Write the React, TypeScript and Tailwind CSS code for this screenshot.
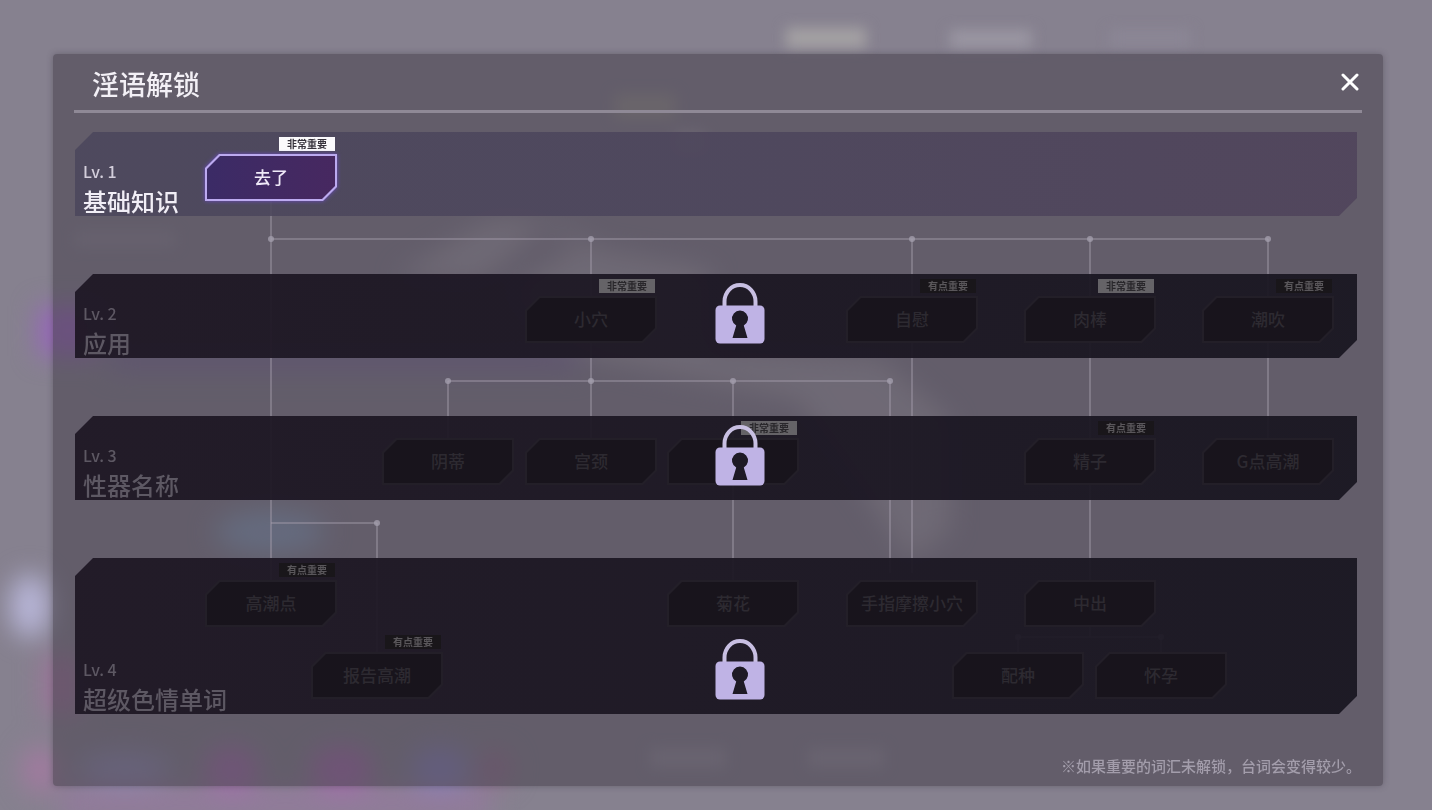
import clsx from 'clsx';

type Importance = 'high' | 'medium';

interface WordNode {
  label: string;
  x: number;
  line?: number;
  importance?: Importance;
}

interface Level {
  level: number;
  name: string;
  locked: boolean;
  tall?: boolean;
  nodes: WordNode[];
}

// x values are measured on a tree this many units wide
const TREE_WIDTH = 1282;
const pct = (x: number) => `${(x / TREE_WIDTH) * 100}%`;

const levels: Level[] = [
  {
    level: 1,
    name: '基础知识',
    locked: false,
    nodes: [{ label: '去了', x: 196, importance: 'high' }],
  },
  {
    level: 2,
    name: '应用',
    locked: true,
    nodes: [
      { label: '小穴', x: 516, importance: 'high' },
      { label: '自慰', x: 837, importance: 'medium' },
      { label: '肉棒', x: 1015, importance: 'high' },
      { label: '潮吹', x: 1193, importance: 'medium' },
    ],
  },
  {
    level: 3,
    name: '性器名称',
    locked: true,
    nodes: [
      { label: '阴蒂', x: 373 },
      { label: '宫颈', x: 516 },
      { label: '肛门', x: 658, importance: 'high' },
      { label: '精子', x: 1015, importance: 'medium' },
      { label: 'G点高潮', x: 1193 },
    ],
  },
  {
    level: 4,
    name: '超级色情单词',
    locked: true,
    tall: true,
    nodes: [
      { label: '高潮点', x: 196, importance: 'medium' },
      { label: '菊花', x: 658 },
      { label: '手指摩擦小穴', x: 837 },
      { label: '中出', x: 1015 },
      { label: '报告高潮', x: 302, line: 1, importance: 'medium' },
      { label: '配种', x: 943, line: 1 },
      { label: '怀孕', x: 1086, line: 1 },
    ],
  },
];

// [x1, y1, x2, y2]
const links = [
  [196, 107, 196, 450],
  [196, 107, 1193, 107],
  [516, 107, 516, 308],
  [837, 107, 837, 441],
  [1015, 107, 1015, 505],
  [1193, 107, 1193, 308],
  [373, 249, 815, 249],
  [373, 249, 373, 308],
  [658, 249, 658, 450],
  [815, 249, 815, 441],
  [196, 391, 302, 391],
  [302, 391, 302, 522],
  [943, 505, 1086, 505],
  [943, 505, 943, 522],
  [1086, 505, 1086, 522],
];

const joints = [
  [196, 107],
  [516, 107],
  [837, 107],
  [1015, 107],
  [1193, 107],
  [373, 249],
  [516, 249],
  [658, 249],
  [815, 249],
  [302, 391],
  [943, 505],
  [1086, 505],
];

// Out-of-focus scene behind the dialog
function Backdrop() {
  return (
    <svg
      className="absolute inset-0 h-full w-full"
      viewBox="0 0 1432 810"
      preserveAspectRatio="none"
      aria-hidden="true"
    >
      <defs>
        <filter id="soft" x="-50%" y="-100%" width="200%" height="300%" colorInterpolationFilters="sRGB">
          <feGaussianBlur stdDeviation="7" />
        </filter>
        <filter id="softer" x="-50%" y="-100%" width="200%" height="300%" colorInterpolationFilters="sRGB">
          <feGaussianBlur stdDeviation="13" />
        </filter>
      </defs>
      <g filter="url(#soft)">
        <rect x="786" y="28" width="80" height="20" fill="#a5a2a4" />
        <rect x="950" y="30" width="82" height="18" fill="#9b97a3" />
        <rect x="1110" y="30" width="80" height="16" fill="#8c8796" />
        <rect x="615" y="94" width="60" height="24" fill="#94908f" />
        <rect x="675" y="132" width="30" height="20" fill="#9a94a0" />
        <rect x="650" y="748" width="76" height="20" fill="#928d9a" />
        <rect x="808" y="748" width="76" height="20" fill="#928d9a" />
        <rect x="75" y="232" width="100" height="14" fill="#8f8a98" />
      </g>
      <g filter="url(#softer)">
        <path
          d="M395 278 490 220h40l70 30 110 20v80l170 10 70 60v110l-40 30-40-60-70-100-240-50-50-60 80-50-40-20-70 60z"
          fill="#a7a2ae"
          opacity=".75"
        />
        <rect x="38" y="306" width="60" height="50" fill="#9668b8" />
        <rect x="110" y="345" width="470" height="26" fill="#7f7098" />
        <ellipse cx="30" cy="606" rx="20" ry="32" fill="#b8b6d8" />
        <ellipse cx="270" cy="532" rx="55" ry="22" fill="#8a9cb8" />
        <rect x="42" y="655" width="40" height="60" fill="#9a7498" />
        <ellipse cx="40" cy="770" rx="18" ry="24" fill="#a27aa0" />
        <rect x="60" y="788" width="430" height="30" fill="#937a9c" />
        <ellipse cx="125" cy="768" rx="48" ry="16" fill="#8f8bb0" />
        <ellipse cx="232" cy="768" rx="28" ry="22" fill="#9f6fa8" />
        <ellipse cx="342" cy="768" rx="32" ry="22" fill="#a06ca8" />
        <ellipse cx="440" cy="768" rx="30" ry="22" fill="#8681b4" />
        <ellipse cx="495" cy="768" rx="16" ry="18" fill="#957090" />
      </g>
    </svg>
  );
}

function LockIcon() {
  return (
    <svg viewBox="0 0 50 61" className="h-[61px] w-[50px]" role="img" aria-label="未解锁">
      <path d="M9.500 25V18.500a15.500 16.500 0 0 1 31 0V25" fill="none" stroke="#c8bfe2" strokeWidth="4" />
      <rect x=".5" y="22.500" width="49" height="38" rx="4.500" fill="#bfb3e5" />
      <path d="M21.200 42.500 17.500 55h15l-3.700-12.500a8 8 0 1 0-7.600 0z" fill="#1e1a25" />
    </svg>
  );
}

function ImportanceBadge({ importance, locked }: { importance: Importance; locked: boolean }) {
  const high = importance === 'high';
  return (
    <span
      className={clsx(
        'flex h-3.5 w-14 items-center justify-center text-[10px] font-bold leading-none',
        high && !locked && 'bg-[#fbfafc] text-[#37333c]',
        high && locked && 'bg-[#656367] text-[#29272b]',
        !high && 'bg-[#19161a] text-[#5a575b]'
      )}
    >
      {high ? '非常重要' : '有点重要'}
    </span>
  );
}

function WordButton({ node, locked }: { node: WordNode; locked: boolean }) {
  return (
    <div
      className={clsx('absolute flex w-[132px] -translate-x-1/2 flex-col gap-[3px]', node.line ? 'top-[77px]' : 'top-[5px]')}
      style={{ left: pct(node.x) }}
    >
      <div className="flex h-3.5 justify-end pr-0.5">
        {node.importance && <ImportanceBadge importance={node.importance} locked={locked} />}
      </div>
      <div className={clsx('h-[47px]', !locked && 'drop-shadow-[0_0_2px_#6a4cc0]')}>
        <button
          type="button"
          disabled={locked}
          className={clsx(
            'h-full w-full p-0.5 [clip-path:polygon(14px_0,100%_0,100%_calc(100%_-_14px),calc(100%_-_14px)_100%,0_100%,0_14px)]',
            locked ? 'bg-[#231f28]' : 'bg-[#bcaaf0]'
          )}
        >
          <span
            className={clsx(
              'flex h-full w-full items-center justify-center whitespace-nowrap pb-0.5 text-[17px] font-medium [clip-path:polygon(13px_0,100%_0,100%_calc(100%_-_13px),calc(100%_-_13px)_100%,0_100%,0_13px)]',
              locked ? 'bg-[#18141c] text-[#2d2a31]' : 'bg-linear-to-r from-[#3b2b66] to-[#472860] text-[#efe9f8]'
            )}
          >
            {node.label}
          </span>
        </button>
      </div>
    </div>
  );
}

function LevelBand({ level }: { level: Level }) {
  const { locked } = level;
  return (
    <section className={clsx('relative', level.tall ? 'h-[156px]' : 'h-[84px]')}>
      <div
        className={clsx(
          'flex h-full flex-col justify-end gap-1 pb-px pl-2 [clip-path:polygon(18px_0,100%_0,100%_calc(100%_-_18px),calc(100%_-_18px)_100%,0_100%,0_18px)]',
          locked
            ? 'bg-linear-to-r from-[#1f1825]/95 to-[#1a1722]/95 text-[#5d5863]'
            : 'bg-linear-to-r from-[#4c475c]/90 via-[#4d465c]/90 to-[#50445b]/90 text-[#f1eef6]'
        )}
      >
        <span className={clsx('text-base leading-6 font-medium', !locked && 'text-[#d3cedb]')}>Lv. {level.level}</span>
        <h2 className="text-2xl leading-7 font-medium">{level.name}</h2>
      </div>
      {level.nodes.map((node) => (
        <WordButton key={node.label} node={node} locked={locked} />
      ))}
      {locked && (
        <div className="pointer-events-none absolute inset-0 flex items-end justify-center pb-3.5 pl-12">
          <LockIcon />
        </div>
      )}
    </section>
  );
}

function TreeLinks() {
  return (
    <svg className="absolute inset-0 h-full w-full" aria-hidden="true">
      <g stroke="#a39dae" strokeOpacity=".45" strokeWidth="2">
        {links.map(([x1, y1, x2, y2], i) => (
          <line key={i} x1={pct(x1)} y1={y1} x2={pct(x2)} y2={y2} />
        ))}
        <line x1={pct(196)} y1={69} x2={pct(196)} y2={107} />
      </g>
      <g fill="#a39dac" fillOpacity=".8">
        {joints.map(([x, y], i) => (
          <circle key={i} cx={pct(x)} cy={y} r="3" />
        ))}
      </g>
    </svg>
  );
}

function CloseIcon() {
  return (
    <svg viewBox="0 0 18 18" className="h-[18px] w-[18px]" aria-hidden="true">
      <path d="M2 2l14 14M16 2l-14 14" fill="none" stroke="#ffffff" strokeWidth="3" strokeLinecap="round" />
    </svg>
  );
}

export default function App() {
  return (
    <div className="relative min-h-screen bg-[#86818f] pt-[54px] pr-[49px] pb-6 pl-[53px] font-['Noto_Sans_CJK_SC',sans-serif]">
      <Backdrop />
      <main className="relative rounded-sm bg-[#433d49]/52 px-[21px] pb-2 shadow-[0_0_6px_rgba(60,54,68,0.4)]">
        <header className="flex h-[59px] items-center justify-between border-b-3 border-[#8f8996] pr-[3px] pl-[18px]">
          <h1 className="pt-1 text-[27px] leading-9 font-medium text-[#f3f0f6]">淫语解锁</h1>
          <button type="button" aria-label="关闭">
            <CloseIcon />
          </button>
        </header>

        <div className="relative mt-[19px] mr-[5px] ml-px flex flex-col gap-[58px]">
          <TreeLinks />
          {levels.map((level) => (
            <LevelBand key={level.level} level={level} />
          ))}
        </div>

        <p className="mt-10 pr-px text-right text-[15px] leading-6 font-medium text-[#a39dab]">
          ※如果重要的词汇未解锁，台词会变得较少。
        </p>
      </main>
    </div>
  );
}
